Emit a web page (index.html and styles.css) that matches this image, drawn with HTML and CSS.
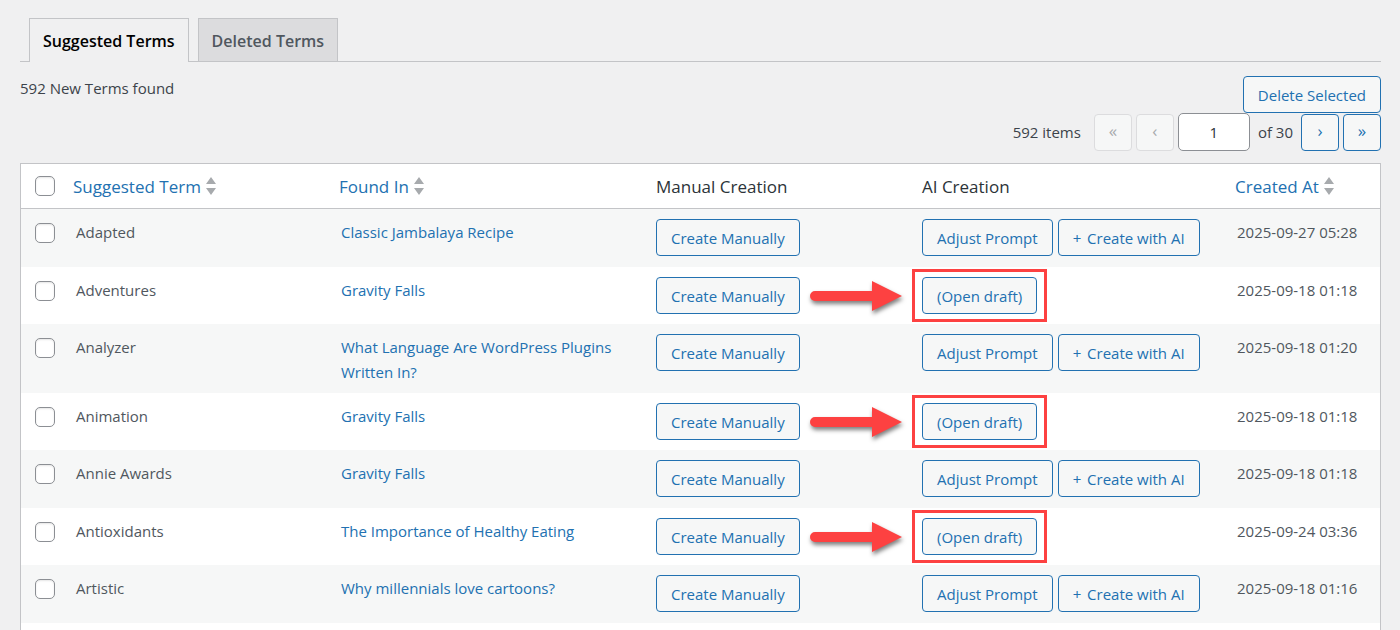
FILE: index.html
```html
<!DOCTYPE html>
<html lang="en">
<head>
  <meta charset="UTF-8">
  <meta name="viewport" content="width=device-width, initial-scale=1.0">
  <title>Suggested Terms</title>
  <link rel="stylesheet" href="styles.css">
</head>
<body>
  <svg class="defs" width="0" height="0" aria-hidden="true">
    <symbol id="sort" viewBox="0 0 10 18">
      <path d="M5 0l5 7H0zM0 11h10l-5 7z" fill="#a7aaad"/>
    </symbol>
    <symbol id="arrow" viewBox="0 0 92 30">
      <path d="M5 10H62V0L92 15L62 30V20H5A5 5 0 0 1 5 10Z" fill="#fd4141"/>
    </symbol>
  </svg>
  <div class="wrap">
    <nav class="tabs">
      <a href="#suggested" class="tab active">Suggested Terms</a>
      <a href="#deleted" class="tab">Deleted Terms</a>
    </nav>
    <div class="toolbar">
      <span class="found">592 New Terms found</span>
      <button class="button">Delete Selected</button>
    </div>
    <div class="pagination">
      <span class="items">592 items</span>
      <button class="button page-btn" disabled aria-label="First page">«</button>
      <button class="button page-btn" disabled aria-label="Previous page">‹</button>
      <input type="text" class="current-page" value="1" aria-label="Current page">
      <span class="total">of 30</span>
      <button class="button page-btn" aria-label="Next page">›</button>
      <button class="button page-btn" aria-label="Last page">»</button>
    </div>
    <table>
      <colgroup>
        <col class="col-check">
        <col class="col-term">
        <col class="col-found">
        <col class="col-manual">
        <col class="col-ai">
        <col class="col-date">
      </colgroup>
      <thead>
        <tr>
          <th><input type="checkbox" aria-label="Select all"></th>
          <th><a href="#term">Suggested Term<svg class="sort"><use href="#sort"/></svg></a></th>
          <th><a href="#found">Found In<svg class="sort"><use href="#sort"/></svg></a></th>
          <th>Manual Creation</th>
          <th>AI Creation</th>
          <th><a href="#created">Created At<svg class="sort"><use href="#sort"/></svg></a></th>
        </tr>
      </thead>
      <tbody>
        <tr>
          <td><input type="checkbox" aria-label="Select Adapted"></td>
          <td>Adapted</td>
          <td><a href="#post">Classic Jambalaya Recipe</a></td>
          <td><button class="button">Create Manually</button></td>
          <td><div class="actions"><button class="button">Adjust Prompt</button><button class="button"><span class="plus">+</span> Create with AI</button></div></td>
          <td>2025-09-27 05:28</td>
        </tr>
        <tr>
          <td><input type="checkbox" aria-label="Select Adventures"></td>
          <td>Adventures</td>
          <td><a href="#post">Gravity Falls</a></td>
          <td><button class="button">Create Manually</button></td>
          <td><div class="callout"><svg class="arrow"><use href="#arrow"/></svg><button class="button">(Open draft)</button></div></td>
          <td>2025-09-18 01:18</td>
        </tr>
        <tr>
          <td><input type="checkbox" aria-label="Select Analyzer"></td>
          <td>Analyzer</td>
          <td><a href="#post">What Language Are WordPress Plugins Written In?</a></td>
          <td><button class="button">Create Manually</button></td>
          <td><div class="actions"><button class="button">Adjust Prompt</button><button class="button"><span class="plus">+</span> Create with AI</button></div></td>
          <td>2025-09-18 01:20</td>
        </tr>
        <tr>
          <td><input type="checkbox" aria-label="Select Animation"></td>
          <td>Animation</td>
          <td><a href="#post">Gravity Falls</a></td>
          <td><button class="button">Create Manually</button></td>
          <td><div class="callout"><svg class="arrow"><use href="#arrow"/></svg><button class="button">(Open draft)</button></div></td>
          <td>2025-09-18 01:18</td>
        </tr>
        <tr>
          <td><input type="checkbox" aria-label="Select Annie Awards"></td>
          <td>Annie Awards</td>
          <td><a href="#post">Gravity Falls</a></td>
          <td><button class="button">Create Manually</button></td>
          <td><div class="actions"><button class="button">Adjust Prompt</button><button class="button"><span class="plus">+</span> Create with AI</button></div></td>
          <td>2025-09-18 01:18</td>
        </tr>
        <tr>
          <td><input type="checkbox" aria-label="Select Antioxidants"></td>
          <td>Antioxidants</td>
          <td><a href="#post">The Importance of Healthy Eating</a></td>
          <td><button class="button">Create Manually</button></td>
          <td><div class="callout"><svg class="arrow"><use href="#arrow"/></svg><button class="button">(Open draft)</button></div></td>
          <td>2025-09-24 03:36</td>
        </tr>
        <tr>
          <td><input type="checkbox" aria-label="Select Artistic"></td>
          <td>Artistic</td>
          <td><a href="#post">Why millennials love cartoons?</a></td>
          <td><button class="button">Create Manually</button></td>
          <td><div class="actions"><button class="button">Adjust Prompt</button><button class="button"><span class="plus">+</span> Create with AI</button></div></td>
          <td>2025-09-18 01:16</td>
        </tr>
        <tr>
          <td colspan="6"></td>
        </tr>
      </tbody>
    </table>
  </div>
</body>
</html>
```
FILE: styles.css
```css
* {
  box-sizing: border-box;
}

body {
  margin: 0;
  height: 100vh;
  overflow: hidden;
  background-color: #f0f0f1;
  color: #3c434a;
  font-family: "Open Sans", "Noto Sans", sans-serif;
  font-size: 15px;
  line-height: 25px;
}

a {
  color: #2271b1;
  text-decoration: none;
}

.defs {
  position: absolute;
}

.wrap {
  padding: 18px 19px 0 20px;
}

.tabs {
  display: flex;
  gap: 9px;
  padding-left: 9px;
  border-bottom: 1px solid #c3c4c7;
}

.tab {
  padding: 7px 13px 5px;
  border: 1px solid #c3c4c7;
  border-bottom: none;
  background-color: #dcdcde;
  color: #50575e;
  font-size: 16px;
  font-weight: 600;
  line-height: 30px;
}

.tab.active {
  margin-bottom: -1px;
  padding-bottom: 6px;
  background-color: #f0f0f1;
  color: #000;
}

.toolbar {
  display: flex;
  justify-content: space-between;
  align-items: flex-start;
  padding-top: 14px;
}

.button {
  height: 37px;
  padding: 0 14px;
  border: 1px solid #2271b1;
  border-radius: 4px;
  background-color: #f6f7f7;
  color: #2271b1;
  font-family: inherit;
  font-size: 15px;
  white-space: nowrap;
  cursor: pointer;
}

.button:hover {
  background-color: #f0f0f1;
}

.button:disabled {
  border-color: #dcdcde;
  color: #a7aaad;
  cursor: default;
}

.pagination {
  display: flex;
  justify-content: flex-end;
  align-items: center;
  gap: 4px;
  margin-bottom: 12px;
}

.page-btn {
  width: 38px;
  padding: 0 0 4px;
  font-size: 17px;
}

.items {
  margin-right: 9px;
}

.total {
  margin: 0 4px;
}

.current-page {
  width: 72px;
  height: 38px;
  border: 1px solid #8c8f94;
  border-radius: 5px;
  background-color: #fff;
  color: #2c3338;
  font-family: inherit;
  font-size: 15px;
  text-align: center;
}

table {
  width: 100%;
  table-layout: fixed;
  border: 1px solid #c3c4c7;
  border-spacing: 0;
  background-color: #fff;
}

.col-check {
  width: 42px;
}

.col-term,
.col-manual {
  width: 266px;
}

.col-found {
  width: 317px;
}

.col-ai {
  width: 313px;
}

.col-date {
  width: 155px;
}

th {
  height: 45px;
  padding: 0 10px;
  border-bottom: 1px solid #c3c4c7;
  color: #2c3338;
  font-size: 17px;
  font-weight: 400;
  text-align: left;
  white-space: nowrap;
}

td {
  height: 58px;
  padding: 11px 12px 8px;
  color: #50575e;
  vertical-align: top;
}

th:first-child,
td:first-child {
  padding-left: 14px;
  padding-right: 0;
}

td:nth-child(2) {
  padding-left: 13px;
}

td:nth-child(4),
td:nth-child(5) {
  padding: 10px 10px 0;
}

tbody tr:nth-child(odd) {
  background-color: #f6f7f7;
}

tbody tr:nth-child(even) td {
  height: 57px;
}

input[type="checkbox"] {
  appearance: none;
  display: block;
  width: 20px;
  height: 20px;
  margin: 0;
  border: 1px solid #8c8f94;
  border-radius: 5px;
  background-color: #fff;
  box-shadow: inset 0 1px 2px rgba(0, 0, 0, 0.1);
}

td input[type="checkbox"] {
  margin-top: 3px;
}

input[type="checkbox"]:checked {
  background-color: #2271b1;
}

.sort {
  width: 10px;
  height: 18px;
  margin-left: 5px;
  vertical-align: -2px;
}

.actions {
  display: flex;
  gap: 5px;
}

td .button {
  display: block;
}

.plus {
  margin-right: 2px;
}

/* red frame and arrow around the draft button */
.callout {
  position: relative;
  width: max-content;
}

.callout::after {
  content: "";
  position: absolute;
  inset: -8px -10px;
  border: 3px solid #fd4141;
  pointer-events: none;
}

.arrow {
  position: absolute;
  top: 4px;
  right: calc(100% + 20px);
  width: 92px;
  height: 30px;
  overflow: visible;
  filter: drop-shadow(1px 3px 2px rgba(0, 0, 0, 0.5));
}
```
